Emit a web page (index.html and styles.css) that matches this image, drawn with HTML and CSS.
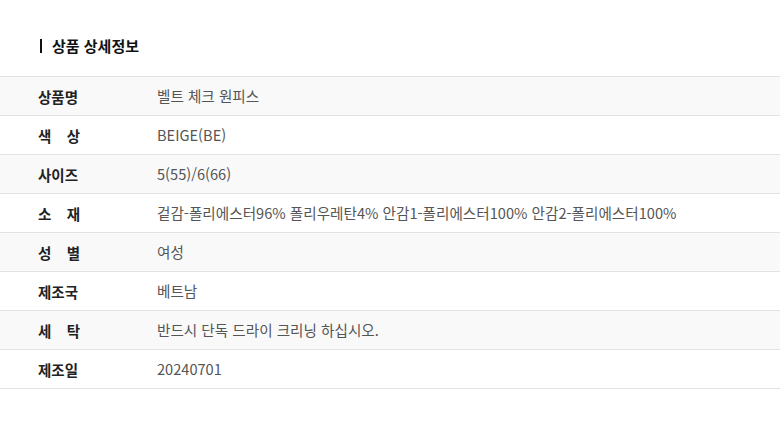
FILE: index.html
```html
<!DOCTYPE html>
<html lang="ko">
<head>
    <meta charset="UTF-8">
    <meta name="viewport" content="width=device-width, initial-scale=1.0">
    <title>상품 상세정보</title>
    <link rel="stylesheet" href="styles.css">
</head>
<body>
    <h2 class="section-title">상품 상세정보</h2>
    <table class="detail-table">
        <tr>
            <th><span class="label">상품명</span></th>
            <td>벨트 체크 원피스</td>
        </tr>
        <tr>
            <th><span class="label">색 상</span></th>
            <td>BEIGE(BE)</td>
        </tr>
        <tr>
            <th><span class="label">사이즈</span></th>
            <td>5(55)/6(66)</td>
        </tr>
        <tr>
            <th><span class="label">소 재</span></th>
            <td>겉감-폴리에스터96% 폴리우레탄4% 안감1-폴리에스터100% 안감2-폴리에스터100%</td>
        </tr>
        <tr>
            <th><span class="label">성 별</span></th>
            <td>여성</td>
        </tr>
        <tr>
            <th><span class="label">제조국</span></th>
            <td>베트남</td>
        </tr>
        <tr>
            <th><span class="label">세 탁</span></th>
            <td>반드시 단독 드라이 크리닝 하십시오.</td>
        </tr>
        <tr>
            <th><span class="label">제조일</span></th>
            <td>20240701</td>
        </tr>
    </table>
</body>
</html>
```

FILE: styles.css
```css
/* General Styling */
body {
    margin: 0;
    background-color: #fff;
    color: #222;
    font-family: "Noto Sans CJK KR", "Noto Sans", sans-serif;
}

.section-title {
    margin: 0;
    padding: 34px 0 0 40px;
    height: 58px;
    box-sizing: border-box;
    display: flex;
    align-items: center;
    gap: 10px;
    font-size: 15px;
    font-weight: 700;
    color: #111;
    line-height: 24px;
}

.section-title::before {
    content: "";
    width: 2px;
    height: 14px;
    background-color: #111;
}

/* Table */
.detail-table {
    width: 100%;
    margin-top: 18px;
    border-collapse: collapse;
    border-top: 1px solid #e2e2e2;
}

.detail-table tr {
    height: 39px;
    border-bottom: 1px solid #e2e2e2;
}

.detail-table tr:nth-child(odd) {
    background-color: #f9f9f9;
}

.detail-table th {
    width: 157px;
    padding: 0 0 0 38px;
    box-sizing: border-box;
    text-align: left;
    font-size: 14.5px;
    font-weight: 700;
    color: #222;
}

.label {
    display: inline-block;
    width: 42px;
    text-align: justify;
    text-align-last: justify;
}

.detail-table td {
    padding: 0 0 2px;
    font-size: 14.6px;
    color: #555;
}
```
